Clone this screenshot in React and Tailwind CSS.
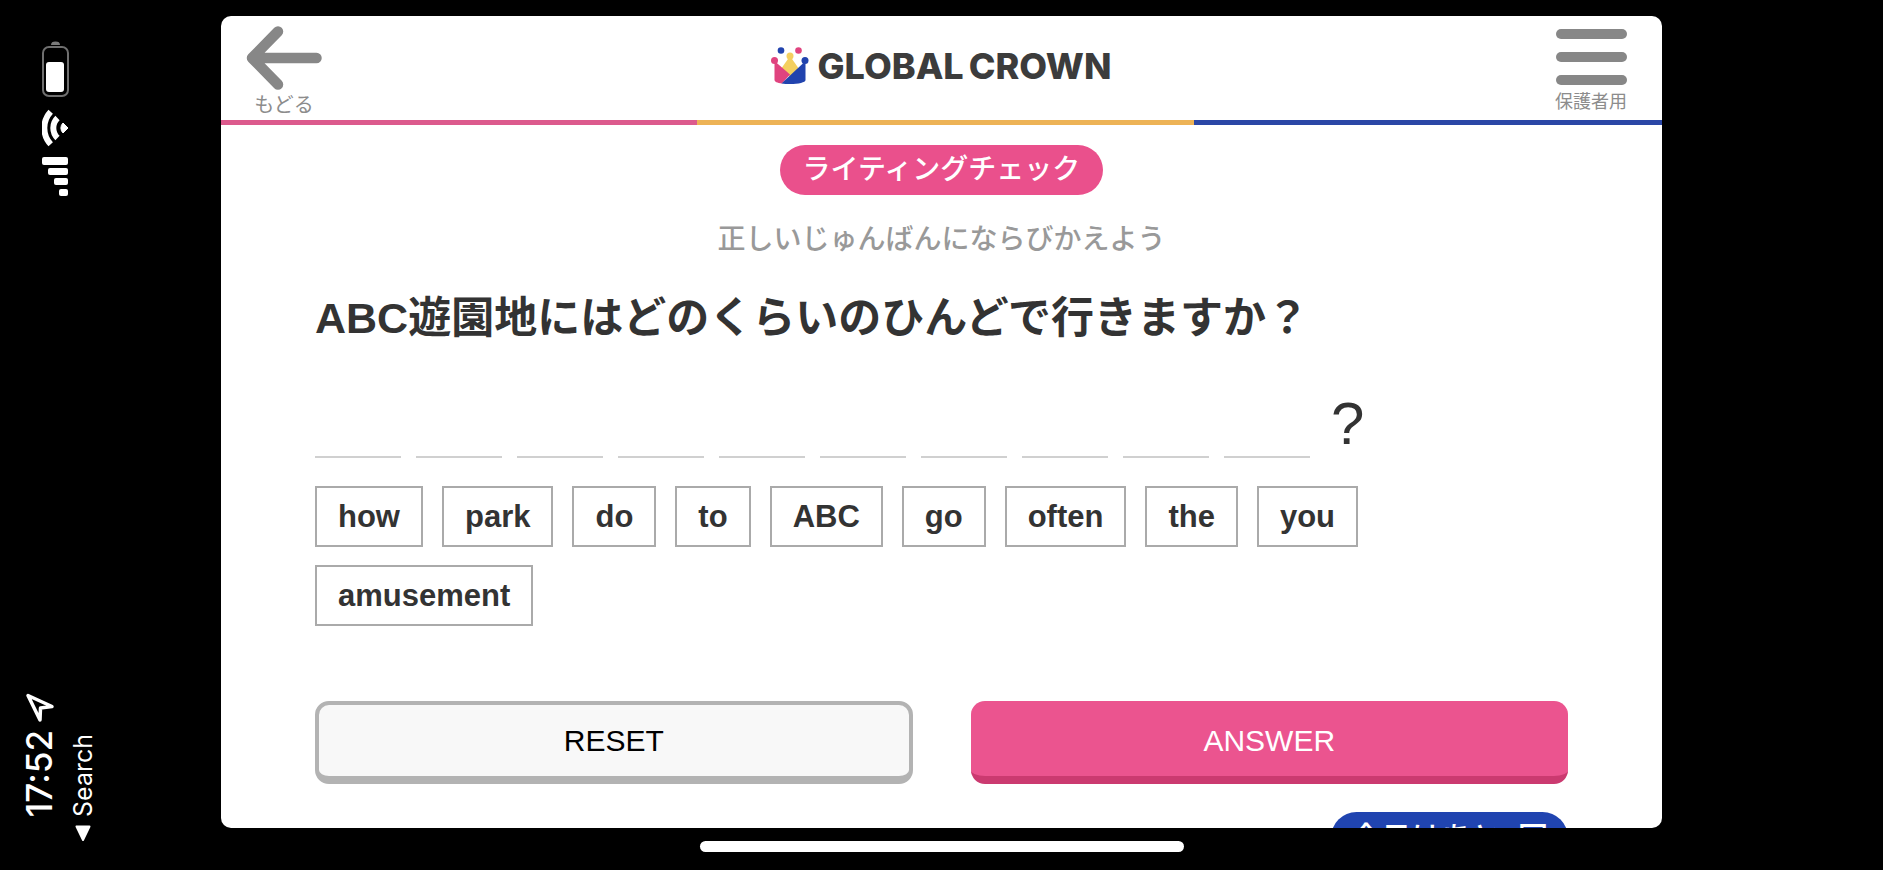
import { useState } from "react";

const WORDS = ["how", "park", "do", "to", "ABC", "go", "often", "the", "you", "amusement"];

function BatteryIcon() {
  return (
    <svg width="28" height="58" viewBox="0 0 28 58" aria-hidden="true">
      <path d="M9 4a4.5 3.4 0 0 1 9 0z" fill="#7a7a7a" />
      <rect x="1" y="6" width="25" height="49" rx="6" fill="none" stroke="#6f6f6f" strokeWidth="2" />
      <rect x="4" y="21" width="18" height="30" rx="3" fill="#fff" />
    </svg>
  );
}

function WifiIcon() {
  return (
    <svg width="28" height="38" viewBox="0 0 28 38" fill="none" stroke="#fff" aria-hidden="true">
      <path d="M8.700 2.700a24 24 0 0 0 0 32.600" strokeWidth="6" />
      <path d="M15.500 9a14 14 0 0 0 0 20" strokeWidth="6" />
      <path d="M26 19l-5-5a7 7 0 0 0 0 10z" fill="#fff" strokeWidth="1" strokeLinejoin="round" />
    </svg>
  );
}

function SignalIcon() {
  return (
    <svg width="28" height="40" viewBox="0 0 28 40" fill="#fff" aria-hidden="true">
      <rect x="0" y="0" width="26" height="8" rx="2" />
      <rect x="6" y="11" width="20" height="7" rx="2" />
      <rect x="12" y="21" width="14" height="7" rx="2" />
      <rect x="17" y="32" width="9" height="7" rx="2" />
    </svg>
  );
}

function LocationIcon() {
  return (
    <svg width="30" height="30" viewBox="0 0 30 30" aria-hidden="true">
      <path
        d="M3 3.500L27 14.500l-11.500 1.500L15 28z"
        fill="none"
        stroke="#fff"
        strokeWidth="3.500"
        strokeLinejoin="round"
      />
    </svg>
  );
}

function CrownLogo() {
  return (
    <svg width="38" height="38" viewBox="0 0 38 38" aria-hidden="true">
      <path d="M19 9l9 13-9 8-9-8z" fill="#f4cf5f" />
      <path d="M3.500 14L19 27.500 11 36.500C6 36 3.500 34.500 3.500 33z" fill="#e0437f" />
      <path d="M34.500 14v19c0 2.500-7 4-15.500 4-3 0-6 0-8.500-.5z" fill="#2143ae" />
      <circle cx="3.500" cy="13.500" r="3.500" fill="#e0437f" />
      <circle cx="34" cy="13.500" r="3.500" fill="#2143ae" />
      <circle cx="19" cy="9" r="3.500" fill="#f4cf5f" />
      <circle cx="10" cy="3.500" r="3.300" fill="#2143ae" />
      <circle cx="27.500" cy="3.500" r="3.300" fill="#e0437f" />
    </svg>
  );
}

function BackIcon() {
  return (
    <svg width="76" height="64" viewBox="0 0 76 64" aria-hidden="true">
      <path
        d="M32 5.500L6 32l26 26.500M6 32h64.500"
        fill="none"
        stroke="#878787"
        strokeWidth="10.500"
        strokeLinecap="round"
        strokeLinejoin="round"
      />
    </svg>
  );
}

// Phone status bar, turned on its side
function StatusBar() {
  return (
    <aside className="flex w-[221px] shrink-0 flex-col justify-between pt-[41px] pb-[28px] text-white">
      <div className="flex flex-col gap-[10px] pl-[42px]">
        <BatteryIcon />
        <WifiIcon />
        <SignalIcon />
      </div>
      <div className="flex items-end gap-[12px] pl-[22px]">
        <div className="flex flex-col items-center gap-[8px] pb-[25px]">
          <LocationIcon />
          <span className="rotate-180 font-['Inter'] text-[35px] leading-[35px] font-medium [writing-mode:vertical-rl]">
            17:52
          </span>
        </div>
        <a href="#search" className="flex flex-col items-center gap-[8px]">
          <span className="rotate-180 font-['Inter'] text-[25px] leading-[28px] [writing-mode:vertical-rl]">
            Search
          </span>
          <svg width="16" height="17" viewBox="0 0 16 17" aria-hidden="true">
            <path d="M1.500 1.500h13L8 15z" fill="#fff" stroke="#fff" strokeWidth="2" strokeLinejoin="round" />
          </svg>
        </a>
      </div>
    </aside>
  );
}

function Header() {
  return (
    <header className="shrink-0">
      <div className="grid h-[104px] grid-cols-[1fr_auto_1fr] items-start px-[25px] pt-[10px] text-[#8c8c8c]">
        <button type="button" className="flex w-[76px] flex-col items-center">
          <BackIcon />
          <span className="text-[20px] leading-[30px]">もどる</span>
        </button>
        <h1 className="flex items-center gap-[8px] pt-[21px] text-[#3c3c3c]">
          <CrownLogo />
          <span className="flex gap-[5px] font-['Inter'] text-[36px] leading-[38px] font-extrabold">
            <span>GLOBAL</span>
            <span>CROWN</span>
          </span>
        </h1>
        <button type="button" className="flex w-[92px] flex-col items-center justify-self-end pt-[3px]">
          <span className="flex w-[71px] flex-col gap-[13px]">
            <span className="h-[10px] rounded-full bg-[#878787]" />
            <span className="h-[10px] rounded-full bg-[#878787]" />
            <span className="h-[10px] rounded-full bg-[#878787]" />
          </span>
          <span className="pt-[3px] text-[18px] leading-[28px]">保護者用</span>
        </button>
      </div>
      <div className="flex h-[5px]">
        <div className="w-[33%] bg-[#dc5a8d]" />
        <div className="grow bg-[#edb356]" />
        <div className="w-[32.5%] bg-[#2b47a6]" />
      </div>
    </header>
  );
}

export default function App() {
  const [picked, setPicked] = useState([]);

  const pick = (word) => {
    if (!picked.includes(word)) setPicked([...picked, word]);
  };

  return (
    <div className="flex h-screen bg-black font-['Liberation_Sans','Noto_Sans_CJK_JP',sans-serif] text-[#333]">
      <StatusBar />

      <div className="flex min-w-0 grow flex-col items-center pt-[16px]">
        <div className="flex min-h-0 w-full grow flex-col overflow-hidden rounded-[10px] bg-white">
          <Header />

          <main className="flex flex-col px-[94px] pt-[20px]">
            <div className="flex flex-col items-center">
              <p className="rounded-full bg-[#ea508c] px-[23px] text-[28px] leading-[50px] font-medium text-white">
                ライティングチェック
              </p>
              <p className="pt-[25px] text-[28px] leading-[40px] font-medium text-[#999]">
                正しいじゅんばんにならびかえよう
              </p>
            </div>

            <h2 className="pt-[26px] text-[43px] leading-[64px] font-bold">
              ABC遊園地にはどのくらいのひんどで行きますか？
            </h2>

            {/* Answer slots */}
            <div className="flex items-end gap-[15px] pt-[32px]">
              {WORDS.map((word, i) => (
                <span
                  key={word}
                  className="h-[76px] w-[86px] truncate border-b-2 border-[#d0d0d0] text-center text-[28px] leading-[76px] font-bold"
                >
                  {picked[i]}
                </span>
              ))}
              <span className="pb-[4px] pl-[6px] text-[60px] leading-[60px]">?</span>
            </div>

            {/* Word choices */}
            <div className="flex max-w-[1060px] flex-wrap gap-x-[19px] gap-y-[18px] pt-[28px]">
              {WORDS.map((word) => (
                <button
                  key={word}
                  type="button"
                  onClick={() => pick(word)}
                  className="border-2 border-[#aaa] px-[21px] text-[31px] leading-[57px] font-bold"
                >
                  {word}
                </button>
              ))}
            </div>

            <div className="grid grid-cols-2 gap-[58px] pt-[75px]">
              <button
                type="button"
                onClick={() => setPicked([])}
                className="h-[83px] rounded-[14px] border-4 border-b-8 border-[#b3b3b3] bg-[#f8f8f8] text-[30px] text-black"
              >
                RESET
              </button>
              <button
                type="button"
                className="h-[83px] rounded-[14px] border-t-4 border-b-8 border-t-[#eb548f] border-b-[#cb3a70] bg-[#eb548f] text-[30px] text-white"
              >
                ANSWER
              </button>
            </div>

            <p className="mt-[28px] self-end rounded-full bg-[#2044b0] px-[20px] pt-[1px] text-[30px] leading-[50px] font-medium text-white">
              今日はあと9回
            </p>
          </main>
        </div>

        {/* Home indicator */}
        <div className="mt-[13px] mb-[18px] h-[11px] w-[484px] shrink-0 rounded-full bg-white" />
      </div>

      <div className="w-[221px] shrink-0" />
    </div>
  );
}
